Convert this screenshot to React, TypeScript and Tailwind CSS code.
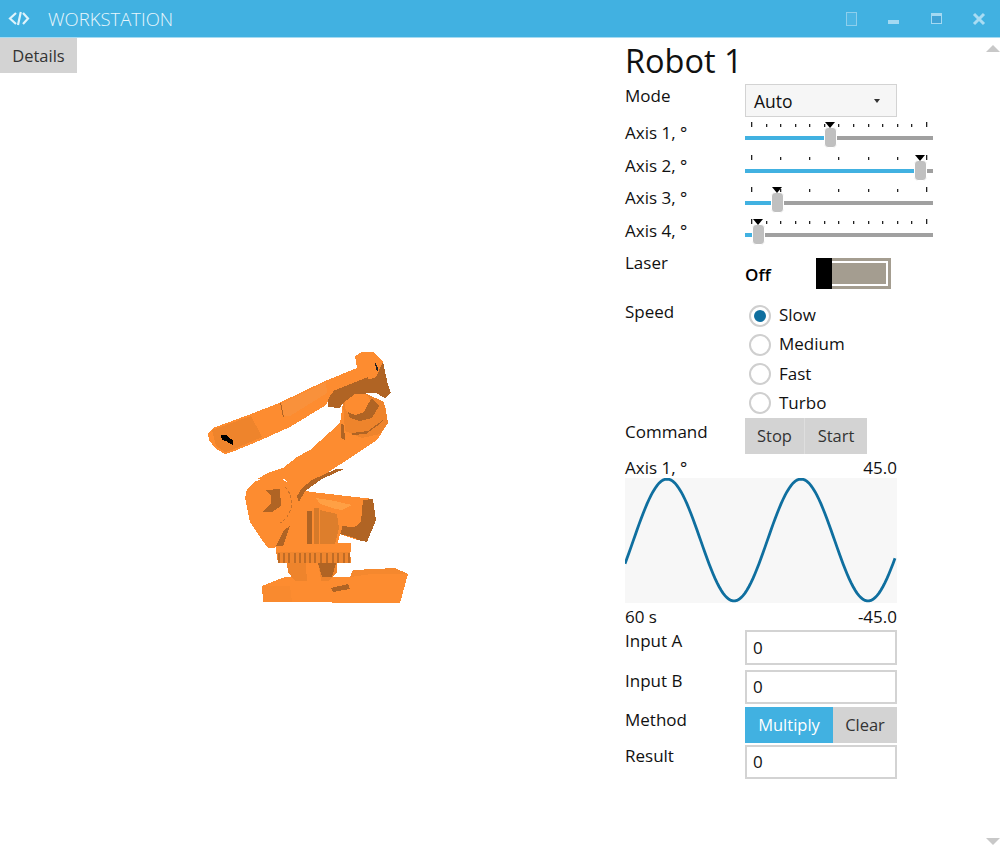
import React from "react";

const FONT = "font-['Open_Sans','Noto_Sans',sans-serif]";

function Label({ children, pt = "pt-0" }: { children: React.ReactNode; pt?: string }) {
  return <div className={`w-[120px] shrink-0 text-[17px] leading-[22px] text-[#111] ${pt}`}>{children}</div>;
}

function Slider({ value, ticks }: { value: number; ticks: number }) {
  const tickList = Array.from({ length: ticks }, (_, i) => i);
  return (
    <div className="relative h-full w-[188px]">
      <div className="absolute left-[6px] top-0 flex h-[6px] w-[176px] items-start justify-between">
        {tickList.map((i) => (
          <span key={i} className={`w-px bg-[#222] shadow-[1px_0_0_#bbbbbb] ${i === 0 || i === ticks - 1 ? "h-[5px]" : "mt-[2px] h-[3px]"}`} />
        ))}
      </div>
      <div className="absolute left-0 top-[14px] flex h-[4px] w-full">
        <div className="h-full bg-[#41b1e1]" style={{ width: value }} />
        <div className="h-full flex-1 bg-[#a0a0a0]" />
      </div>
      <div className="absolute top-[5px] h-[21px] w-[13px] rounded-[4px] border border-white bg-[#c0c0c0]" style={{ left: value - 6.5 }} />
      <div
        className="absolute top-0 h-0 w-0 border-x-[5px] border-t-[6px] border-x-transparent border-t-black"
        style={{ left: value - 5 }}
      />
    </div>
  );
}

function AxisRow({ label, value, ticks, h, pt }: { label: string; value: number; ticks: number; h: string; pt?: string }) {
  return (
    <div className={`flex ${h}`}>
      <Label pt={pt}>{label}</Label>
      <Slider value={value} ticks={ticks} />
    </div>
  );
}

function Radio({ label, checked }: { label: string; checked?: boolean }) {
  return (
    <div className="flex h-[29.25px] items-center pl-[4px]">
      <span className="flex h-[22px] w-[22px] items-center justify-center rounded-full border-2 border-[#cfcfcf] bg-white">
        {checked && <span className="h-[12px] w-[12px] rounded-full bg-[#0f6f9f]" />}
      </span>
      <span className="ml-[8px] pb-[1px] text-[17px] leading-[22px] text-[#111]">{label}</span>
    </div>
  );
}

function Box({ h, value }: { h: string; value: string }) {
  return (
    <div className={`flex w-[152px] items-center border-2 border-[#d3d3d3] bg-white pl-[6px] text-[17px] text-[#111] ${h}`}>
      {value}
    </div>
  );
}

function Chart() {
  const pts: string[] = [];
  for (let x = 0; x <= 270; x += 2) {
    const y = 62 + 61 * -Math.cos(((x + 625 - 667) / 134) * 2 * Math.PI);
    pts.push(`${x},${y.toFixed(1)}`);
  }
  return (
    <svg width="272" height="125" viewBox="0 0 272 125" className="block bg-[#f7f7f7]">
      <polyline points={pts.join(" ")} fill="none" stroke="#0f6f9f" strokeWidth="2.8" />
    </svg>
  );
}

const L = "#fd8c30";
const M = "#ee842c";
const D = "#b06424";
const H = "#ffa044";

function Robot() {
  const p = (points: string, fill: string) => <polygon points={points} fill={fill} />;
  return (
    <svg width="220" height="270" viewBox="200 340 220 270" shapeRendering="crispEdges" className="block">
      {/* base plate */}
      {p("262,586 272,582 285,577 350,577 353,570 395,568 408,574 400,603 263,602", L)}
      {p("350,577 353,570 395,568 408,574 395,574 372,574", "#f5882e")}
      {p("262,586 290,586 292,602 263,602", "#f98a2f")}
      {p("331,588 348,584 350,589 333,592", D)}
      {/* pedestal */}
      {p("287,563 337,563 337,572 328,581 295,581 288,572", M)}
      {p("306,563 318,563 322,585 307,585", L)}
      {p("318,563 336,563 332,577 322,577", D)}
      {/* turntable with teeth */}
      {p("276,551 350,551 351,563 278,563", "#f0862e")}
      {[278, 283, 288, 294, 299, 304, 309, 314, 320, 326, 332, 337, 343, 348].map((x) => (
        <rect key={x} x={x} y={553} width="2" height="10" fill="#c06c26" />
      ))}
      {p("276,545 351,543 351,552 276,552", L)}
      {/* motor housing right */}
      {p("312,492 373,499 376,520 367,542 357,540 337,533 312,530", L)}
      {p("308,497 330,500 352,505 342,510 310,504", H)}
      {p("363,500 373,499 376,520 367,542 357,540 350,531 361,522", D)}
      {p("337,526 357,527 355,538 337,533", D)}
      {/* central body */}
      {p("290,488 312,492 320,504 338,510 342,528 337,545 290,546", L)}
      {p("307,511 312,511 312,544 307,544", D)}
      {p("314,508 319,508 319,544 314,544", "#d67a2a")}
      {p("320,510 337,514 339,528 335,544 320,544", "#dd7e2c")}
      {/* shoulder wheel */}
      {p("245,498 247,489 254,482 264,478 278,477 289,483 294,495 296,512 296,546 268,548 262,540 250,522", L)}
      {p("265,490 280,489 281,506 272,512 262,512 271,504 271,495", D)}
      {p("284,530 290,526 283,546 276,546", D)}
      <path d="M285 487 A23 23 0 0 1 280 523" fill="none" stroke="#c8722a" strokeWidth="1" strokeDasharray="3 2" />
      {/* lower arm */}
      {p("257,479 270,472 283,468 297,457 310,450 340,423 343,403 367,395 385,405 388,423 377,440 350,458 327,473 305,490 299,502 296,512 293,490 285,479", L)}
      {p("344,469 336,469 312,480 302,488 297,496 299,502 305,491 322,479", D)}
      {/* elbow */}
      {p("343,403 345,396 365,393 384,402 388,423 380,434 362,438 345,431", M)}
      <circle cx="358" cy="405" r="13" fill={L} />
      {p("348,412 355,415 364,412 368,404 372,398 379,406 372,418 360,421 350,418", D)}
      {p("341,424 344,425 345,440 341,438", D)}
      {p("352,433 368,431 383,420 381,423 366,434 352,435", D)}
      {/* forearm */}
      {p("327,395 376,376 383,362 388,385 391,393 385,398 376,393 355,394 343,403 340,408 328,407", D)}
      {p("208,434 213,428 251,414 279,403 325,381 357,368 355,356 362,352 373,352 383,362 376,377 331,394 326,405 290,427 261,440 232,452 225,454 215,448 209,440", L)}
      {p("212,430 251,416 262,437 232,450 225,452 216,446", M)}
      {p("281,404 326,382 327,393 290,416 284,416", "#f9913b")}
      {p("333,391 368,377 369,380 334,394", D)}
      {p("280,403 281,403 284,417 283,417", D)}
      {p("221,435 226,435 229,438 233,440 233,445 229,443 226,441 222,440", "#000")}
      {p("375,362 378,368 378,372 376,370", "#222")}
    </svg>
  );
}

export default function App() {
  return (
    <div className={`flex h-[852px] w-[1000px] flex-col overflow-hidden bg-white ${FONT}`}>
      {/* Title bar */}
      <header className="flex h-[38px] shrink-0 items-center border-b border-[#a6dbf2] bg-[#41b1e1]">
        <svg width="22" height="17" viewBox="0 0 22 17" className="ml-[8px]" fill="none" stroke="#dff3fb" strokeWidth="2.2">
          <path d="M8 3 L2 8.5 L8 14" />
          <path d="M15 3 L20 8.5 L15 14" />
          <path d="M12.8 2 L10 15" />
        </svg>
        <span className="ml-[18px] text-[18.5px] font-light text-[#e8f6fc]">WORKSTATION</span>
        <div className="ml-auto flex h-full">
          <div className="flex w-[41px] items-center justify-center">
            <svg width="11" height="14" viewBox="0 0 11 14"><rect x="0.5" y="0.5" width="10" height="13" fill="#4db6e4" stroke="#8ecfec" /></svg>
          </div>
          <div className="flex w-[43px] items-center justify-center pt-[7px]">
            <svg width="11" height="5" viewBox="0 0 11 5"><rect width="11" height="4" fill="#a3d9f2" /></svg>
          </div>
          <div className="flex w-[43px] items-center justify-center">
            <svg width="11" height="11" viewBox="0 0 11 11"><rect x="0.5" y="0.5" width="10" height="10" fill="#41a3d6" stroke="#a3d9f2" /><rect width="11" height="3" fill="#a3d9f2" /></svg>
          </div>
          <div className="flex w-[42px] items-center justify-center">
            <svg width="14" height="14" viewBox="0 0 14 14"><path d="M2 2 L12 12 M12 2 L2 12" stroke="#a9dcf3" strokeWidth="3" /></svg>
          </div>
        </div>
      </header>

      <div className="flex min-h-0 flex-1">
        {/* Left canvas */}
        <div className="w-[625px] shrink-0">
          <div className="flex h-[35px] w-[77px] items-center justify-center bg-[#d3d3d3] pt-[1px] text-[16.5px] text-[#333]">Details</div>
          <div className="ml-[200px] mt-[267px]">
            <Robot />
          </div>
        </div>

        {/* Right form */}
        <div className="w-[360px] shrink-0">
          <div className="flex h-[46px] items-center text-[32.5px] leading-none text-[#111]">Robot 1</div>
          <div className="flex h-[38px]">
            <Label pt="pt-[1px]">Mode</Label>
            <div className="flex h-[33px] w-[152px] items-center justify-between border border-[#d3d3d3] bg-[#f6f6f6] pl-[8px] pr-[16px] pt-[1px] text-[17.5px] text-[#111]">
              <span>Auto</span>
              <span className="h-0 w-0 border-x-[3.5px] border-t-[4px] border-x-transparent border-t-[#333]" />
            </div>
          </div>
          <AxisRow label="Axis 1, °" value={85} ticks={13} h="h-[33px]" />
          <AxisRow label="Axis 2, °" value={175} ticks={7} h="h-[32px]" />
          <AxisRow label="Axis 3, °" value={32} ticks={7} h="h-[32px]" />
          <AxisRow label="Axis 4, °" value={13} ticks={13} h="h-[33px]" pt="pt-[1px]" />

          <div className="flex h-[49px]">
            <Label>Laser</Label>
            <div className="flex h-[37px] w-[146px] items-end">
              <span className="w-[71px] pb-[3px] text-[17px] font-semibold leading-[22px] text-black">Off</span>
              <div className="relative h-[31px] w-[75px] border-[3px] border-[#a49d90] bg-white p-[2px]">
                <div className="h-full bg-[#a49d90]" />
                <div className="absolute -left-[3px] -top-[3px] h-[31px] w-[16px] bg-black" />
              </div>
            </div>
          </div>

          <div className="flex h-[117px]">
            <Label>Speed</Label>
            <div>
              <Radio label="Slow" checked />
              <Radio label="Medium" />
              <Radio label="Fast" />
              <Radio label="Turbo" />
            </div>
          </div>

          <div className="flex h-[36px]">
            <Label pt="pt-[3px]">Command</Label>
            <div className="flex h-full text-[16.5px] text-[#333]">
              <div className="flex w-[60px] items-center justify-center border-r border-[#dedede] bg-[#d3d3d3]">Stop</div>
              <div className="flex w-[62px] items-center justify-center bg-[#d3d3d3]">Start</div>
            </div>
          </div>

          <div className="w-[272px] text-[17px] leading-[22px] text-[#111]">
            <div className="flex h-[24px] justify-between pt-[3px]">
              <span>Axis 1, °</span>
              <span>45.0</span>
            </div>
            <Chart />
            <div className="flex h-[27px] justify-between pt-[3px]">
              <span>60 s</span>
              <span>-45.0</span>
            </div>
          </div>

          <div className="flex h-[40px]">
            <Label>Input A</Label>
            <Box h="h-[35px]" value="0" />
          </div>
          <div className="flex h-[37px]">
            <Label>Input B</Label>
            <Box h="h-[34px]" value="0" />
          </div>
          <div className="flex h-[38px]">
            <Label pt="pt-[2px]">Method</Label>
            <div className="flex h-[36px] text-[16.5px]">
              <div className="flex w-[88px] items-center justify-center bg-[#41b1e1] text-white">Multiply</div>
              <div className="flex w-[64px] items-center justify-center bg-[#d3d3d3] text-[#333]">Clear</div>
            </div>
          </div>
          <div className="flex h-[34px]">
            <Label>Result</Label>
            <Box h="h-[34px]" value="0" />
          </div>
        </div>

        {/* Scroll arrows */}
        <div className="flex flex-1 flex-col items-center justify-between pb-[7px] pt-[7px]">
          <span className="h-0 w-0 border-x-[7px] border-b-[7px] border-x-transparent border-b-[#c8c8c8]" />
          <span className="h-0 w-0 border-x-[7px] border-t-[7px] border-x-transparent border-t-[#c8c8c8]" />
        </div>
      </div>
    </div>
  );
}
